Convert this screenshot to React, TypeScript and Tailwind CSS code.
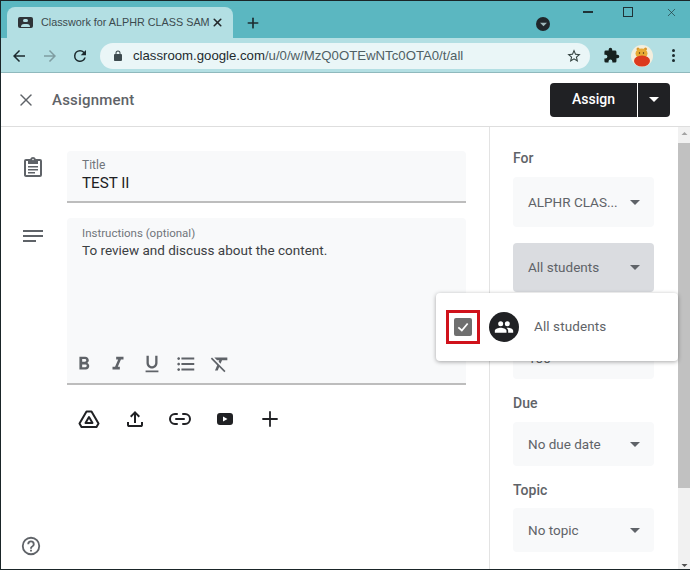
import { Link2, Plus, X } from "lucide-react";

const roboto = "font-['Roboto',sans-serif]";

function Caret({ className = "" }: { className?: string }) {
  return (
    <svg width="10" height="5" viewBox="0 0 10 5" className={className}>
      <path d="M0 0h10L5 5z" fill="currentColor" />
    </svg>
  );
}

function Icon({ d, size = 20, className = "" }: { d: string; size?: number; className?: string }) {
  return (
    <svg width={size} height={size} viewBox="0 0 24 24" fill="currentColor" className={className}>
      <path d={d} />
    </svg>
  );
}

function Pooh() {
  return (
    <svg width="22" height="22" viewBox="0 0 22 22">
      <circle cx="11" cy="11" r="11" fill="#f3eedd" />
      <circle cx="7" cy="4" r="1.5" fill="#d9962c" />
      <circle cx="14.500" cy="4" r="1.500" fill="#d9962c" />
      <ellipse cx="10.500" cy="8.500" rx="6" ry="5" fill="#e8ab35" />
      <ellipse cx="11" cy="16" rx="8" ry="5.500" fill="#dc3a1e" />
      <circle cx="8.500" cy="8" r="0.700" fill="#332211" />
      <circle cx="12.500" cy="8" r="0.700" fill="#332211" />
    </svg>
  );
}

function BrowserChrome() {
  return (
    <div className="shrink-0 font-['Liberation_Sans',sans-serif]">
      <div className="flex h-[38px] items-end bg-[#5bb7c1] pl-[7px]">
        <div className="flex h-[31px] w-[226px] items-center rounded-t-lg bg-[#b3dfe3] pl-[11px] pr-[9px]">
          <div className="relative mr-2 h-[11px] w-[15px] rounded-[2px] bg-[#2f3438]">
            <div className="absolute left-[5px] top-[2px] h-[3px] w-[5px] rounded-full bg-[#b3dfe3]" />
            <div className="absolute bottom-[1px] left-[3px] h-[3px] w-[9px] rounded-t-sm bg-[#b3dfe3]" />
          </div>
          <span className="w-[162px] whitespace-nowrap text-[10.800px] text-[#3b4a4e]">
            Classwork for ALPHR CLASS SAM
          </span>
          <X size={13} strokeWidth={3} className="ml-auto text-[#22282b]" />
        </div>
        <Plus size={16} strokeWidth={2.500} className="mb-[7px] ml-[12px] text-[#1d2c30]" />
        <div className="ml-[275px] mb-[7px] flex h-[14px] w-[14px] items-center justify-center rounded-full bg-[#20262a]">
          <Caret className="w-[7px] text-[#9fb7ba]" />
        </div>
        <div className="mb-[25px] ml-[33px] h-[2px] w-[10px] bg-[#1f3236]" />
        <div className="mb-[21px] ml-[30px] h-[10px] w-[10px] border border-[#1f3236]" />
        <X size={13} strokeWidth={1.200} className="mb-[19px] ml-[32px] text-[#1f3236]" />
      </div>
      <div className="flex h-[35px] items-center border-b border-[#8fb9bd] bg-[#b3dfe3] pt-[1px]">
        <Icon className="ml-[10px] text-[#1c2a2e]" size={18} d="M20 11H7.800l5.600-5.600L12 4l-8 8 8 8 1.400-1.400L7.800 13H20z" />
        <Icon className="ml-[13px] text-[#7f9da1]" size={18} d="M4 11h12.200l-5.600-5.600L12 4l8 8-8 8-1.400-1.400 5.600-5.600H4z" />
        <Icon className="ml-[12px] text-[#1c2a2e]" size={18} d="M17.650 6.350A7.950 7.950 0 0 0 12 4a8 8 0 1 0 7.730 10h-2.080A6 6 0 1 1 12 6c1.660 0 3.140.69 4.220 1.780L13 11h7V4z" />
        <div className="ml-[11px] flex h-[26px] w-[490px] shrink-0 items-center rounded-[13px] bg-[#eaf6f7] pl-[12px] pr-[8px]">
          <Icon className="text-[#3c4a4e]" size={12} d="M18 8h-1V6A5 5 0 0 0 7 6v2H6a2 2 0 0 0-2 2v10c0 1.100.9 2 2 2h12a2 2 0 0 0 2-2V10a2 2 0 0 0-2-2zM9 6a3 3 0 0 1 6 0v2H9z" />
          <span className="ml-[9px] whitespace-nowrap text-[13.200px] text-[#4f6064]">
            <span className="text-[#1d2a2e]">classroom.google.com</span>/u/0/w/MzQ0OTEwNTc0OTA0/t/all
          </span>
          <Icon className="ml-auto text-[#33423f]" size={16} d="M22 9.240l-7.190-.62L12 2 9.190 8.630 2 9.240l5.460 4.730L5.820 21 12 17.270 18.180 21l-1.630-7.030L22 9.240zM12 15.400l-3.760 2.270 1-4.280-3.320-2.880 4.380-.38L12 6.100l1.710 4.040 4.380.38-3.320 2.880 1 4.280L12 15.400z" />
        </div>
        <Icon className="ml-[13px] text-[#16211f]" size={17} d="M20.500 11H19V7a2 2 0 0 0-2-2h-4V3.500a2.500 2.500 0 0 0-5 0V5H4a2 2 0 0 0-2 2v3.800h1.500a2.700 2.700 0 0 1 0 5.400H2V20a2 2 0 0 0 2 2h3.800v-1.500a2.700 2.700 0 0 1 5.400 0V22H17a2 2 0 0 0 2-2v-4h1.500a2.500 2.500 0 0 0 0-5z" />
        <div className="ml-[11px]">
          <Pooh />
        </div>
        <div className="ml-[19px] flex flex-col gap-[2px]">
          <div className="h-[3px] w-[3px] rounded-full bg-[#1c2a2e]" />
          <div className="h-[3px] w-[3px] rounded-full bg-[#1c2a2e]" />
          <div className="h-[3px] w-[3px] rounded-full bg-[#1c2a2e]" />
        </div>
      </div>
    </div>
  );
}

function Header() {
  return (
    <div className="flex h-[54px] shrink-0 items-center border-b border-[#dedede] bg-white">
      <X size={20} strokeWidth={1.700} className="ml-[16px] mt-[1px] text-[#5f6368]" />
      <span className="ml-[16px] mt-[1px] text-[15px] font-medium tracking-[0.2px] text-[#5f6368]">Assignment</span>
      <div className="ml-auto mr-[20px] flex h-[34px] items-center rounded-[4px] bg-[#202124] text-white">
        <span className="flex w-[87px] justify-center text-[14px] font-medium">Assign</span>
        <div className="h-full w-px bg-white" />
        <div className="flex w-[32px] justify-center">
          <Caret />
        </div>
      </div>
    </div>
  );
}

function Select({ label, top, active = false }: { label: string; top: string; active?: boolean }) {
  return (
    <div
      className={`flex w-[141px] items-center justify-between rounded-[4px] pl-[15px] pr-[14px] text-[13.500px] ${top} ${
        active ? "bg-[#dadce0] text-[#5f6368]" : "bg-[#f8f9fa] text-[#5f6368]"
      }`}
    >
      <span className="whitespace-nowrap">{label}</span>
      <Caret className="text-[#5f6368]" />
    </div>
  );
}

function Sidebar() {
  return (
    <div className="flex w-[189px] shrink-0 flex-col border-l border-[#e3e3e3] bg-white pl-[23px]">
      <div className="mt-[22px] h-[18px] text-[14px] font-medium leading-[18px] text-[#5f6368]">For</div>
      <Select label="ALPHR CLAS..." top="mt-[10px] h-[50px]" />
      <Select label="All students" top="mt-[16px] h-[49px]" active />
      <div className="mt-[37px] h-[50px] w-[141px] rounded-[4px] bg-[#f8f9fa] pl-[15px] pt-[20px] text-[13.500px] leading-[18px] text-[#5f6368]">
        100
      </div>
      <div className="mt-[15px] h-[18px] text-[14px] font-medium leading-[18px] text-[#5f6368]">Due</div>
      <Select label="No due date" top="mt-[10px] h-[44px]" />
      <div className="mt-[15px] h-[18px] text-[14px] font-medium leading-[18px] text-[#5f6368]">Topic</div>
      <Select label="No topic" top="mt-[9px] h-[44px]" />
    </div>
  );
}

function Scrollbar() {
  return (
    <div className="flex w-[12px] shrink-0 flex-col items-center bg-[#f1f1f1]">
      <Caret className="mt-[5px] h-[3px] w-[7px] rotate-180 text-[#a3a3a3]" />
      <div className="mt-[8px] h-[345px] w-full bg-[#c1c1c1]" />
      <Caret className="mt-auto mb-[3px] h-[3px] w-[7px] text-[#505050]" />
    </div>
  );
}

function Editor() {
  return (
    <div className="relative flex-1 bg-white">
      <div className="ml-[67px] mr-[23px] pt-[24px]">
        <div className="h-[52px] rounded-t-[4px] border-b-2 border-[#bdbdbd] bg-[#f8f9fa] pl-[15px] pt-[7px]">
          <div className="text-[12px] leading-[14px] text-[#70757a]">Title</div>
          <div className="mt-[1px] text-[15.200px] leading-[20px] text-[#202124]">TEST II</div>
        </div>
        <div className="mt-[15px] flex h-[167px] flex-col rounded-t-[4px] border-b-2 border-[#bdbdbd] bg-[#f8f9fa] pl-[15px] pt-[8px]">
          <div className="text-[11.500px] leading-[14px] text-[#70757a]">Instructions (optional)</div>
          <div className="mt-[1px] text-[13.500px] leading-[18px] text-[#3c4043]">To review and discuss about the content.</div>
          <div className="mt-auto mb-[8px] -ml-[9px] flex items-center gap-[12px] text-[#5f6368]">
            <Icon size={22} d="M15.600 10.790c.97-.67 1.650-1.770 1.650-2.790 0-2.260-1.750-4-4-4H7v14h7.040c2.090 0 3.710-1.700 3.710-3.790 0-1.520-.86-2.820-2.150-3.420zM10 6.500h3a1.500 1.500 0 0 1 0 3h-3zm3.500 9H10v-3h3.500a1.500 1.500 0 0 1 0 3z" />
            <Icon size={22} d="M10 4v3h2.210l-3.420 8H6v3h8v-3h-2.210l3.420-8H18V4z" />
            <Icon size={22} d="M12 17c3.310 0 6-2.690 6-6V3h-2.500v8c0 1.930-1.570 3.500-3.500 3.500S8.500 12.930 8.500 11V3H6v8c0 3.310 2.690 6 6 6zm-7 2v2h14v-2z" />
            <Icon size={22} d="M4 10.500c-.83 0-1.500.67-1.500 1.500s.67 1.500 1.500 1.500 1.500-.67 1.500-1.500-.67-1.500-1.500-1.500zm0-6c-.83 0-1.500.67-1.500 1.500S3.170 7.500 4 7.500 5.500 6.830 5.500 6 4.830 4.500 4 4.500zm0 12c-.83 0-1.500.68-1.500 1.500s.68 1.500 1.500 1.500 1.500-.68 1.500-1.500-.67-1.500-1.500-1.500zM7 19h14v-2H7zm0-6h14v-2H7zm0-8v2h14V5z" />
            <Icon size={22} d="M3.270 5L2 6.270l6.970 6.970L6.500 19h3l1.570-3.660L16.730 21 18 19.730 3.550 5.270zM6 5v.18L8.820 8h2.400l-.72 1.680 2.100 2.100L14.210 8H20V5z" />
          </div>
        </div>
        <div className="mt-[22px] flex items-center pl-[10px] text-[#202124]">
          <svg width="24" height="24" viewBox="0 0 24 24" fill="none" stroke="currentColor" strokeWidth="2" strokeLinejoin="round">
            <path d="M9.500 4.500h5l7 12-2 3.500h-15l-2-3.500z" />
            <path d="M12 10l3.500 6h-7z" />
          </svg>
          <Icon className="ml-[22px]" size={24} d="M11 16V7.850l-2.600 2.600L7 9l5-5 5 5-1.400 1.450-2.600-2.600V16zm-5 4c-.55 0-1.020-.2-1.410-.59S4 18.550 4 18v-3h2v3h12v-3h2v3c0 .55-.2 1.020-.59 1.410S18.550 20 18 20z" />
          <Link2 className="ml-[21px]" size={24} strokeWidth={2} />
          <Icon className="ml-[21px]" size={24} d="M7 6h10a3 3 0 0 1 3 3v6a3 3 0 0 1-3 3H7a3 3 0 0 1-3-3V9a3 3 0 0 1 3-3zm3 3.500v5l4.500-2.500z" />
          <Plus className="ml-[21px]" size={24} strokeWidth={1.800} />
        </div>
      </div>
      <Icon className="absolute left-[21px] top-[29px] text-[#5f6368]" size={24} d="M19 3h-4.180A3 3 0 0 0 12 1a3 3 0 0 0-2.820 2H5a2 2 0 0 0-2 2v14c0 1.100.9 2 2 2h14a2 2 0 0 0 2-2V5a2 2 0 0 0-2-2zm-7-.25a.75.75 0 1 1 0 1.500.75.75 0 0 1 0-1.500zM19 19H5V5h2v3h10V5h2zM7 10h10v1.500H7zm0 3h10v1.500H7zm0 3h7v1.500H7z" />
      <Icon className="absolute left-[21px] top-[98px] text-[#5f6368]" size={24} d="M2 5h20v2H2zm0 5h20v2H2zm0 5h13v2H2z" />
      <Icon className="absolute bottom-[13px] left-[20px] text-[#5f6368]" size={22} d="M11 18h2v-2h-2zm1-16a10 10 0 1 0 0 20 10 10 0 0 0 0-20zm0 18a8 8 0 1 1 0-16 8 8 0 0 1 0 16zm0-14a4 4 0 0 0-4 4h2a2 2 0 1 1 4 0c0 2-3 1.750-3 5h2c0-2.250 3-2.500 3-5a4 4 0 0 0-4-4z" />
    </div>
  );
}

function Popup() {
  return (
    <div className="absolute left-[436px] top-[293px] flex h-[68px] w-[242px] items-center rounded-[4px] bg-white shadow-[0_1px_4px_rgba(0,0,0,0.35)]">
      <div className="ml-[10px] flex h-[34px] w-[34px] items-center justify-center border-[3px] border-[#d0121b]">
        <div className="flex h-[18px] w-[18px] items-center justify-center rounded-[2px] bg-[#6f6f6f]">
          <svg width="14" height="14" viewBox="0 0 24 24" fill="none" stroke="white" strokeWidth="3">
            <path d="M4 12.500 10 18 20 6" />
          </svg>
        </div>
      </div>
      <div className="ml-[9px] flex h-[30px] w-[30px] items-center justify-center rounded-full bg-[#202124] text-white">
        <Icon size={20} d="M16 11a3 3 0 1 0 0-6 3 3 0 0 0 0 6zm-8 0a3 3 0 1 0 0-6 3 3 0 0 0 0 6zm0 2c-2.330 0-7 1.170-7 3.500V19h14v-2.500C15 14.170 10.330 13 8 13zm8 0c-.290 0-.620.020-.970.050 1.160.840 1.970 1.970 1.970 3.450V19h6v-2.500c0-2.330-4.670-3.500-7-3.500z" />
      </div>
      <span className="mb-[2px] ml-[15px] text-[13.500px] tracking-[0.1px] text-[#5f6368]">All students</span>
    </div>
  );
}

export default function App() {
  return (
    <div className={`relative flex h-[570px] w-[690px] flex-col overflow-hidden ${roboto}`}>
      <BrowserChrome />
      <Header />
      <div className="flex min-h-0 flex-1">
        <Editor />
        <Sidebar />
        <Scrollbar />
      </div>
      <Popup />
      <div className="pointer-events-none absolute inset-0 border-y border-l border-[#1a2528]" />
    </div>
  );
}
